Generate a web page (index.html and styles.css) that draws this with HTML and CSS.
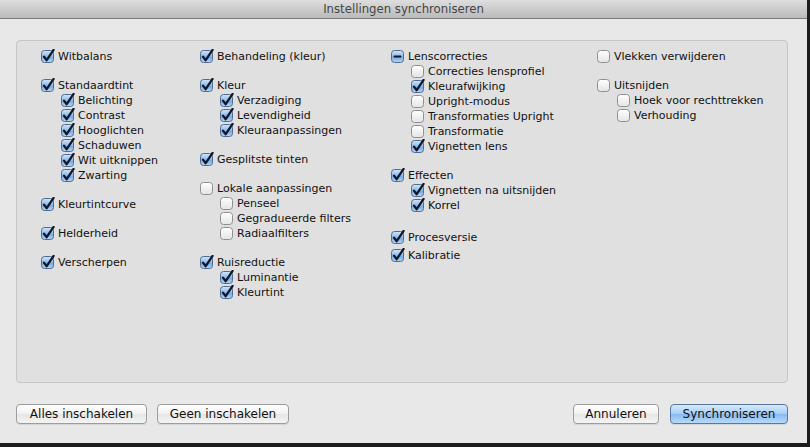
FILE: index.html
```html
<!DOCTYPE html>
<html lang="nl">
<head>
    <meta charset="UTF-8">
    <meta name="viewport" content="width=device-width, initial-scale=1.0">
    <title>Instellingen synchroniseren</title>
    <link rel="stylesheet" href="styles.css">
</head>
<body>
    <!-- checkbox states, reused below -->
    <svg class="defs" width="0" height="0" aria-hidden="true">
        <defs>
            <linearGradient id="boxOff" x1="0" y1="0" x2="0" y2="1">
                <stop offset="0" stop-color="#ffffff"/>
                <stop offset="1" stop-color="#e4e4e4"/>
            </linearGradient>
            <linearGradient id="boxOn" x1="0" y1="0" x2="0" y2="1">
                <stop offset="0" stop-color="#d3e6f9"/>
                <stop offset="0.5" stop-color="#8dbbea"/>
                <stop offset="0.55" stop-color="#74a9e3"/>
                <stop offset="1" stop-color="#b7d8f7"/>
            </linearGradient>
            <symbol id="cb-off" viewBox="0 0 14 15">
                <rect x="0.5" y="1.5" width="12" height="12" rx="3" fill="url(#boxOff)" stroke="#8f8f8f"/>
            </symbol>
            <symbol id="cb-on" viewBox="0 0 14 15">
                <rect x="0.5" y="1.5" width="12" height="12" rx="3" fill="url(#boxOn)" stroke="#4f6b92"/>
                <path d="M3 7.6 L5.7 11.2 L12.6 0.9" fill="none" stroke="#10182c" stroke-width="2.3" stroke-linecap="round" stroke-linejoin="round"/>
            </symbol>
            <symbol id="cb-mixed" viewBox="0 0 14 15">
                <rect x="0.5" y="1.5" width="12" height="12" rx="3" fill="url(#boxOn)" stroke="#4f6b92"/>
                <path d="M3.5 7.5 H9.5" stroke="#10182c" stroke-width="2" stroke-linecap="round"/>
            </symbol>
        </defs>
    </svg>

    <div class="window">
        <div class="titlebar">Instellingen synchroniseren</div>
        <div class="content">
            <div class="panel">
                <div class="column">
                    <div class="group">
                        <div class="item"><svg class="cb"><use href="#cb-on"/></svg>Witbalans</div>
                    </div>
                    <div class="group">
                        <div class="item"><svg class="cb"><use href="#cb-on"/></svg>Standaardtint</div>
                        <div class="item sub"><svg class="cb"><use href="#cb-on"/></svg>Belichting</div>
                        <div class="item sub"><svg class="cb"><use href="#cb-on"/></svg>Contrast</div>
                        <div class="item sub"><svg class="cb"><use href="#cb-on"/></svg>Hooglichten</div>
                        <div class="item sub"><svg class="cb"><use href="#cb-on"/></svg>Schaduwen</div>
                        <div class="item sub"><svg class="cb"><use href="#cb-on"/></svg>Wit uitknippen</div>
                        <div class="item sub"><svg class="cb"><use href="#cb-on"/></svg>Zwarting</div>
                    </div>
                    <div class="group">
                        <div class="item"><svg class="cb"><use href="#cb-on"/></svg>Kleurtintcurve</div>
                    </div>
                    <div class="group">
                        <div class="item"><svg class="cb"><use href="#cb-on"/></svg>Helderheid</div>
                    </div>
                    <div class="group">
                        <div class="item"><svg class="cb"><use href="#cb-on"/></svg>Verscherpen</div>
                    </div>
                </div>

                <div class="column">
                    <div class="group">
                        <div class="item"><svg class="cb"><use href="#cb-on"/></svg>Behandeling (kleur)</div>
                    </div>
                    <div class="group">
                        <div class="item"><svg class="cb"><use href="#cb-on"/></svg>Kleur</div>
                        <div class="item sub"><svg class="cb"><use href="#cb-on"/></svg>Verzadiging</div>
                        <div class="item sub"><svg class="cb"><use href="#cb-on"/></svg>Levendigheid</div>
                        <div class="item sub"><svg class="cb"><use href="#cb-on"/></svg>Kleuraanpassingen</div>
                    </div>
                    <div class="group">
                        <div class="item"><svg class="cb"><use href="#cb-on"/></svg>Gesplitste tinten</div>
                    </div>
                    <div class="group">
                        <div class="item"><svg class="cb"><use href="#cb-off"/></svg>Lokale aanpassingen</div>
                        <div class="item sub"><svg class="cb"><use href="#cb-off"/></svg>Penseel</div>
                        <div class="item sub"><svg class="cb"><use href="#cb-off"/></svg>Gegradueerde filters</div>
                        <div class="item sub"><svg class="cb"><use href="#cb-off"/></svg>Radiaalfilters</div>
                    </div>
                    <div class="group">
                        <div class="item"><svg class="cb"><use href="#cb-on"/></svg>Ruisreductie</div>
                        <div class="item sub"><svg class="cb"><use href="#cb-on"/></svg>Luminantie</div>
                        <div class="item sub"><svg class="cb"><use href="#cb-on"/></svg>Kleurtint</div>
                    </div>
                </div>

                <div class="column">
                    <div class="group">
                        <div class="item"><svg class="cb"><use href="#cb-mixed"/></svg>Lenscorrecties</div>
                        <div class="item sub"><svg class="cb"><use href="#cb-off"/></svg>Correcties lensprofiel</div>
                        <div class="item sub"><svg class="cb"><use href="#cb-on"/></svg>Kleurafwijking</div>
                        <div class="item sub"><svg class="cb"><use href="#cb-off"/></svg>Upright-modus</div>
                        <div class="item sub"><svg class="cb"><use href="#cb-off"/></svg>Transformaties Upright</div>
                        <div class="item sub"><svg class="cb"><use href="#cb-off"/></svg>Transformatie</div>
                        <div class="item sub"><svg class="cb"><use href="#cb-on"/></svg>Vignetten lens</div>
                    </div>
                    <div class="group">
                        <div class="item"><svg class="cb"><use href="#cb-on"/></svg>Effecten</div>
                        <div class="item sub"><svg class="cb"><use href="#cb-on"/></svg>Vignetten na uitsnijden</div>
                        <div class="item sub"><svg class="cb"><use href="#cb-on"/></svg>Korrel</div>
                    </div>
                    <div class="group extra">
                        <div class="item"><svg class="cb"><use href="#cb-on"/></svg>Procesversie</div>
                        <div class="item near"><svg class="cb"><use href="#cb-on"/></svg>Kalibratie</div>
                    </div>
                </div>

                <div class="column">
                    <div class="group">
                        <div class="item"><svg class="cb"><use href="#cb-off"/></svg>Vlekken verwijderen</div>
                    </div>
                    <div class="group">
                        <div class="item"><svg class="cb"><use href="#cb-off"/></svg>Uitsnijden</div>
                        <div class="item sub"><svg class="cb"><use href="#cb-off"/></svg>Hoek voor rechttrekken</div>
                        <div class="item sub"><svg class="cb"><use href="#cb-off"/></svg>Verhouding</div>
                    </div>
                </div>
            </div>

            <div class="actions">
                <div class="side">
                    <button class="btn btn-all">Alles inschakelen</button>
                    <button class="btn btn-none">Geen inschakelen</button>
                </div>
                <div class="side">
                    <button class="btn btn-cancel">Annuleren</button>
                    <button class="btn btn-default">Synchroniseren</button>
                </div>
            </div>
        </div>
    </div>
</body>
</html>
```

FILE: styles.css
```css
body {
    margin: 0;
    background-color: #1d1d1d;
    font-family: "DejaVu Sans", "Liberation Sans", sans-serif;
    color: #111;
}
.defs {
    position: absolute;
    width: 0;
    height: 0;
}
.window {
    width: 807px;
    height: 443px;
    display: flex;
    flex-direction: column;
    background-color: #e8e8e8;
}
.titlebar {
    height: 18px;
    line-height: 18px;
    border-bottom: 1px solid #7c7c7c;
    background: linear-gradient(#dedede, #bababa);
    text-align: center;
    font-family: "DejaVu Sans Condensed", "DejaVu Sans", sans-serif;
    font-size: 13px;
    color: #454545;
}
.content {
    flex: 1;
    display: flex;
    flex-direction: column;
    padding: 21px 19px 19px 16px;
}
.panel {
    flex: 1;
    display: grid;
    grid-template-columns: 159px 191px 206px 1fr;
    align-items: start;
    padding: 8px 0 0 24px;
    border: 1px solid #c6c6c6;
    border-radius: 4px;
    background-color: #e0e0e0;
}
.group {
    margin-bottom: 14px;
}
.group.extra {
    padding-top: 3px;
}
.item {
    display: flex;
    align-items: center;
    height: 15px;
    font-size: 11px;
    white-space: nowrap;
}
.item.sub {
    padding-left: 20px;
}
.item.near {
    margin-top: 3px;
}
.cb {
    width: 14px;
    height: 15px;
    flex: none;
    margin-right: 3px;
    overflow: visible;
}
.actions {
    display: flex;
    justify-content: space-between;
    margin-top: 21px;
}
.side {
    display: flex;
    gap: 10px;
}
.btn {
    height: 20px;
    padding: 0;
    border: 1px solid #9c9c9c;
    border-radius: 4px;
    background: linear-gradient(#ffffff, #f1f1f1 50%, #e6e6e6 51%, #f4f4f4);
    font-family: "DejaVu Sans", "Liberation Sans", sans-serif;
    font-size: 12px;
    color: #111;
    box-shadow: 0 1px 0 rgba(0, 0, 0, 0.08);
}
.btn-all {
    width: 131px;
}
.btn-none {
    width: 132px;
}
.btn-cancel {
    width: 86px;
}
.btn-default {
    width: 118px;
    margin-left: 1px;
    border-color: #5877a6;
    background: linear-gradient(#d6e9fb, #a5cdf4 50%, #86baf0 51%, #b7dafa);
}
```
